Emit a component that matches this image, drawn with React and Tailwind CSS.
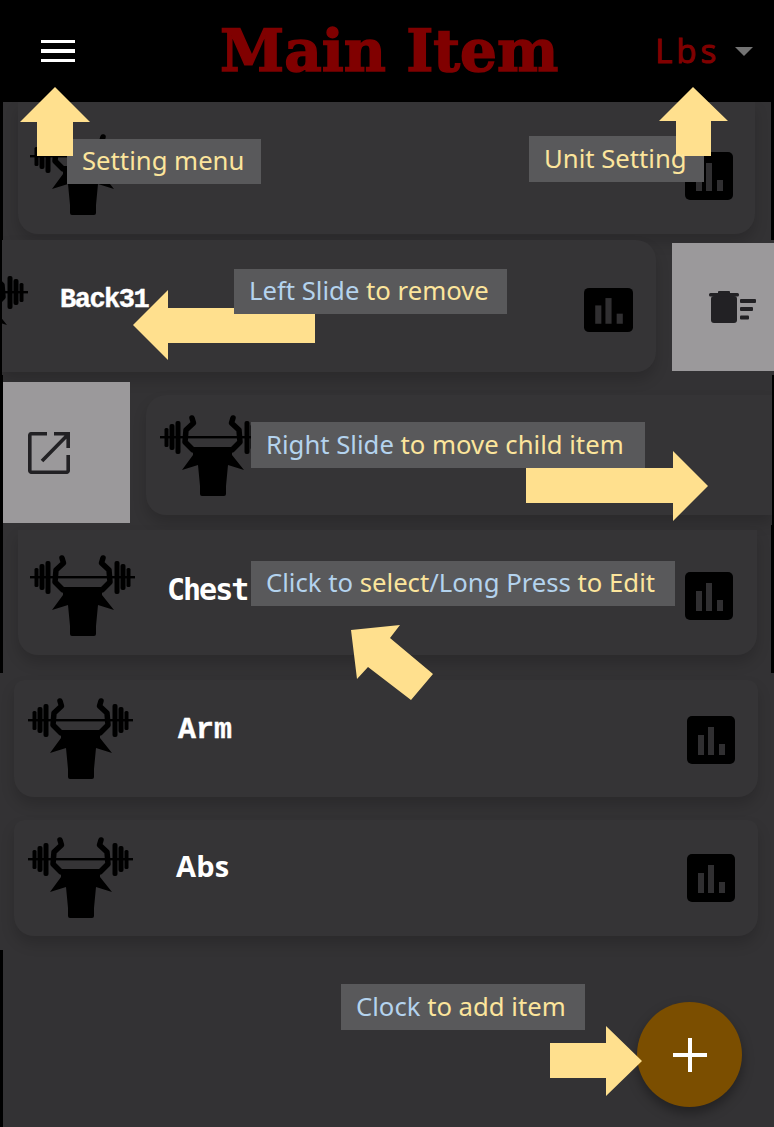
import React from "react";

const Bull = ({ className }) => (
  <svg viewBox="0 0 130 100" className={className} fill="#000">
    <rect x="8" y="29" width="105" height="2.4" />
    <rect x="12.5" y="21" width="4" height="19" rx="1.5" />
    <rect x="17.5" y="17" width="5" height="26" rx="2" />
    <rect x="23.5" y="14" width="5" height="33" rx="2" />
    <rect x="104.5" y="21" width="4" height="19" rx="1.5" />
    <rect x="98.5" y="17" width="5" height="26" rx="2" />
    <rect x="92.5" y="14" width="5" height="33" rx="2" />
    <path
      d="M40 11 L41.5 16 L34 23 L33 35 L41 43 L80 43 L88 35 L87 23 L79.5 16 L81 11"
      fill="none"
      stroke="#000"
      strokeWidth="5.5"
      strokeLinecap="round"
      strokeLinejoin="round"
    />
    <path d="M41 40 L80 40 L80 48 L92 63 L76 58 L74 79 L74 87 Q74 89 72 89 L50 89 Q48 89 48 87 L48 79 L46 58 L30 63 L41 48 Z" />
  </svg>
);

const ChartButton = ({ className }) => (
  <svg viewBox="0 0 48 48" preserveAspectRatio="none" className={className}>
    <rect width="48" height="48" rx="5" fill="#000" />
    <rect x="11" y="19" width="6" height="20" fill="#302f31" />
    <rect x="21" y="11" width="6" height="28" fill="#302f31" />
    <rect x="32" y="28" width="6" height="11" fill="#302f31" />
  </svg>
);

const Blue = ({ children }) => <span className="text-[#b4d3ee]">{children}</span>;

const Tip = ({ className, children }) => (
  <div
    className={`absolute flex items-center whitespace-nowrap bg-[#59595b] pl-[15px] text-[25.7px] text-[#fce59c] [font-family:'Noto_Sans',sans-serif] ${className}`}
  >
    <span className="relative z-10">{children}</span>
  </div>
);

const cardClass =
  "flex overflow-hidden bg-[#353436] shadow-[0_8px_14px_rgba(0,0,0,0.16)]";

const slabLabel =
  "font-bold leading-none text-white [font-family:'Liberation_Mono',monospace] [-webkit-text-stroke:0.4px_#fff]";

export default function App() {
  return (
    <div className="relative flex h-[1127px] w-[774px] flex-col overflow-hidden bg-[#333234]">
      {/* header */}
      <header className="flex h-[102px] shrink-0 items-center bg-black">
        <div className="ml-[41px] flex w-[34px] flex-col gap-[6px]">
          <span className="h-[3.5px] bg-white" />
          <span className="h-[3.5px] bg-white" />
          <span className="h-[3.5px] bg-white" />
        </div>
        <h1 className="ml-[145px] w-[345px] whitespace-nowrap text-[58px] font-bold leading-none text-[#800000] [font-family:'DejaVu_Serif',serif] [-webkit-text-stroke:1.5px_#800000]">
          Main Item
        </h1>
        <span className="ml-[90px] mt-[-1px] w-[80px] text-[33px] leading-none tracking-[4px] text-[#800000] [font-family:'Open_Sans',sans-serif] [-webkit-text-stroke:1px_#800000]">
          Lbs
        </span>
        <span className="h-0 w-0 border-x-[9px] border-t-[9px] border-x-transparent border-t-[#737373]" />
      </header>

      {/* row 1 */}
      <div className="h-[138px] shrink-0 border-x-[3px] border-black">
        <div className={`${cardClass} ml-[15px] h-[132px] w-[737px] rounded-b-[20px]`}>
          <Bull className="ml-[4px] mt-[24px] h-[100px] w-[130px]" />
          <ChartButton className="ml-auto mr-[22px] mt-[50px] h-[48px] w-[48px]" />
        </div>
      </div>

      {/* row 2: slid left */}
      <div className="flex h-[135px] shrink-0 gap-[16px] border-l-[2px] border-black">
        <div className={`${cardClass} h-[132px] w-[654px] rounded-r-[20px]`}>
          <Bull className="ml-[-87px] mt-[22px] h-[100px] w-[130px] shrink-0" />
          <span className={`${slabLabel} ml-[15px] mt-[47px] text-[27px] tracking-[-1.5px]`}>
            Back31
          </span>
          <ChartButton className="ml-auto mr-[23px] mt-[48px] h-[44px] w-[49px]" />
        </div>
        <div className="mt-[3px] flex h-[128px] w-[102px] items-center justify-center bg-[#9b999b]">
          <svg viewBox="0 0 48 32" className="ml-[20px] h-[32px] w-[48px]" fill="#222124">
            <rect x="2" y="5" width="26" height="27" rx="3" />
            <rect x="0" y="2" width="30" height="3.5" rx="1.5" />
            <rect x="9" y="0" width="12" height="3" rx="1" />
            <rect x="31" y="8" width="16" height="4" rx="1" />
            <rect x="31" y="16" width="13" height="4" rx="1" />
            <rect x="31" y="24.5" width="9" height="4" rx="1" />
          </svg>
        </div>
      </div>

      {/* row 3: slid right */}
      <div className="flex h-[150px] shrink-0 border-l-[3px] border-r-[2px] border-black pt-[7px]">
        <div className="flex h-[141px] w-[127px] items-center justify-center bg-[#9b999b]">
          <svg viewBox="0 0 42 42" className="mr-[35px] h-[42px] w-[42px]" fill="none" stroke="#222124" strokeWidth="3.6">
            <path d="M19 1.8 H3 A1.5 1.5 0 0 0 1.8 3 V39 A1.5 1.5 0 0 0 3 40.2 H39 A1.5 1.5 0 0 0 40.2 39 V23" />
            <path d="M14 29 L40 2.5 M26 1.8 H40.2 V16" />
          </svg>
        </div>
        <div className={`${cardClass} ml-[16px] mt-[13px] h-[120px] flex-1 rounded-l-[20px]`}>
          <Bull className="ml-[6px] mt-[12px] h-[100px] w-[130px]" />
        </div>
      </div>

      {/* row 4 */}
      <div className="h-[148px] shrink-0 border-x-[3px] border-black pt-[5px]">
        <div className={`${cardClass} ml-[15px] h-[125px] w-[739px] rounded-b-[20px]`}>
          <Bull className="ml-[4px] mt-[17px] h-[100px] w-[130px]" />
          <span className="ml-[15px] mt-[45px] text-[30px] font-bold leading-none tracking-[-2px] text-white [font-family:'DejaVu_Sans_Mono',monospace]">
            Chest
          </span>
          <ChartButton className="ml-auto mr-[24px] mt-[42px] h-[48px] w-[48px]" />
        </div>
      </div>

      {/* row 5 */}
      <div className="h-[137px] shrink-0 pt-[7px]">
        <div className={`${cardClass} ml-[14px] h-[117px] w-[744px] rounded-b-[20px] rounded-t-[10px]`}>
          <Bull className="ml-[6px] mt-[10px] h-[100px] w-[130px]" />
          <span className={`${slabLabel} ml-[28px] mt-[35px] text-[30px]`}>Arm</span>
          <ChartButton className="ml-auto mr-[23px] mt-[36px] h-[48px] w-[48px]" />
        </div>
      </div>

      {/* row 6 */}
      <div className="h-[140px] shrink-0 pt-[10px]">
        <div className={`${cardClass} ml-[14px] h-[116px] w-[744px] rounded-b-[20px] rounded-t-[10px]`}>
          <Bull className="ml-[6px] mt-[9px] h-[100px] w-[130px]" />
          <span className="ml-[26px] mt-[31px] text-[29px] font-bold leading-none tracking-[0.2px] text-white [font-family:'Open_Sans',sans-serif]">
            Abs
          </span>
          <ChartButton className="ml-auto mr-[23px] mt-[34px] h-[48px] w-[48px]" />
        </div>
      </div>

      <div className="flex-1 border-l-[3px] border-black" />

      {/* add button */}
      <button className="absolute left-[637px] top-[1002px] flex h-[105px] w-[105px] items-center justify-center rounded-full bg-[#7b4e00] shadow-[0_6px_12px_rgba(0,0,0,0.35)]">
        <svg viewBox="0 0 34 34" className="h-[34px] w-[34px]" stroke="#fff" strokeWidth="4">
          <path d="M0 17 H34 M17 0 V34" />
        </svg>
      </button>

      {/* help overlay */}
      <Tip className="left-[67px] top-[139px] h-[45px] w-[194px]">Setting menu</Tip>
      <Tip className="left-[529px] top-[136px] h-[46px] w-[175px]">Unit Setting</Tip>

      <svg viewBox="0 0 774 1127" className="absolute left-0 top-0 h-[1127px] w-[774px]" fill="#ffe08e">
        <polygon points="55,87 90,122 73,122 73,156 37,156 37,122 20,122" />
        <polygon points="693,87 728,121 711,121 711,156 676,156 676,121 659,121" />
        <polygon points="133,325 168,290 168,308 315,308 315,343 168,343 168,360" />
        <polygon points="708,486 673,451 673,468 526,468 526,503 673,503 673,521" />
        <polygon points="351,630 400,625 390,638 433,674 411,700 368,667 357,679" />
        <polygon points="642,1061 606,1026 606,1043 550,1043 550,1078 606,1078 606,1096" />
      </svg>

      <Tip className="left-[234px] top-[269px] h-[45px] w-[273px]">
        <Blue>Left Slide</Blue> to remove
      </Tip>
      <Tip className="left-[251px] top-[422px] h-[46px] w-[394px]">
        <Blue>Right Slide</Blue> to move child item
      </Tip>
      <Tip className="left-[251px] top-[561px] h-[45px] w-[424px]">
        <Blue>Click to</Blue> select<Blue>/Long Press</Blue> to Edit
      </Tip>
      <Tip className="left-[341px] top-[984px] h-[46px] w-[244px]">
        <Blue>Clock</Blue> to add item
      </Tip>
    </div>
  );
}
